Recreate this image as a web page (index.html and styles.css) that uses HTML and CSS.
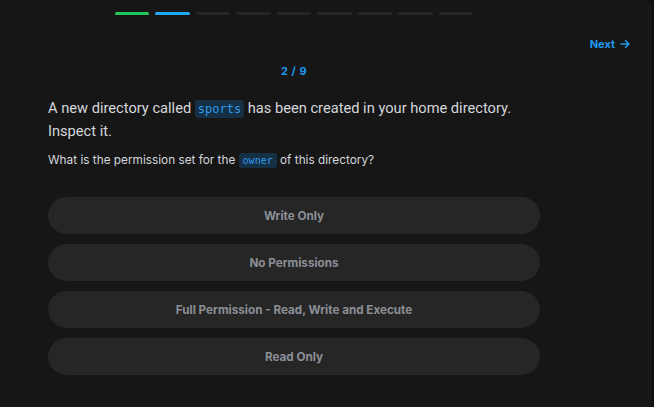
FILE: index.html
```html
<!DOCTYPE html>
<html>
<head>
<meta charset="utf-8">
<link rel="stylesheet" href="styles.css">
</head>
<body>
<div class="panel">
  <div class="column">
    <div class="progress">
      <span class="seg done"></span>
      <span class="seg current"></span>
      <span class="seg"></span>
      <span class="seg"></span>
      <span class="seg"></span>
      <span class="seg"></span>
      <span class="seg"></span>
      <span class="seg"></span>
      <span class="seg"></span>
    </div>
  </div>
  <div class="topbar">
    <a class="next">Next
      <svg width="10" height="10" viewBox="0 0 10 10" fill="none" stroke="currentColor" stroke-width="1.5" stroke-linecap="round" stroke-linejoin="round"><path d="M1 5h8M5.5 1.5 9 5l-3.5 3.5"/></svg>
    </a>
  </div>
  <div class="column">
    <div class="counter">2 / 9</div>
    <p class="prompt">A new directory called <code class="code-lg">sports</code> has been created in your home directory. Inspect it.</p>
    <p class="question">What is the permission set for the <code class="code-sm">owner</code> of this directory?</p>
    <div class="options">
      <button class="option">Write Only</button>
      <button class="option">No Permissions</button>
      <button class="option">Full Permission - Read, Write and Execute</button>
      <button class="option">Read Only</button>
    </div>
  </div>
</div>
</body>
</html>
```
FILE: styles.css
```css
html, body {
  margin: 0;
  padding: 0;
  background: #0e0e0e;
  font-family: Inter, "Noto Sans", sans-serif;
}
.panel {
  width: 652px;
  height: 407px;
  background: #161616;
  border-top-right-radius: 8px;
  overflow: hidden;
}
.column {
  width: 492px;
  margin-left: 48px;
}
.progress {
  display: flex;
  justify-content: center;
  gap: 6px;
  padding-top: 12px;
}
.seg {
  width: 34.5px;
  height: 3px;
  border-radius: 2px;
  background: #262626;
}
.seg.done { background: #1ec85a; }
.seg.current { background: #1ea7f5; }
.topbar {
  display: flex;
  justify-content: flex-end;
  padding-right: 22px;
  margin-top: 22px;
  height: 14px;
}
.next {
  display: flex;
  align-items: center;
  gap: 5px;
  color: #1d9bf0;
  font-size: 11px;
  font-weight: 700;
  line-height: 14px;
}
.counter {
  text-align: center;
  color: #1d9bf0;
  font-size: 11px;
  font-weight: 700;
  line-height: 14px;
  margin-top: 13px;
  letter-spacing: 0.5px;
}
.prompt {
  margin: 19px 0 0;
  color: #d4d7dc;
  font-family: Roboto, "Noto Sans", sans-serif;
  font-size: 14.65px;
  line-height: 22px;
}
code {
  font-family: "DejaVu Sans Mono", "Liberation Mono", monospace;
  background: #152f45;
  color: #2f9bea;
  border-radius: 3px;
}
.code-lg {
  font-size: 12px;
  padding: 2px 3px;
}
.code-sm {
  font-size: 10px;
  padding: 2px 4px;
}
.question {
  margin: 9px 0 0;
  color: #d4d7dc;
  font-size: 11.8px;
  line-height: 18px;
}
.options {
  display: flex;
  flex-direction: column;
  gap: 10px;
  margin-top: 27px;
}
.option {
  height: 37px;
  border: none;
  border-radius: 19px;
  background: #262626;
  color: #8b8f96;
  font-family: Inter, "Noto Sans", sans-serif;
  font-size: 11.7px;
  font-weight: 700;
  padding: 0;
}
```
